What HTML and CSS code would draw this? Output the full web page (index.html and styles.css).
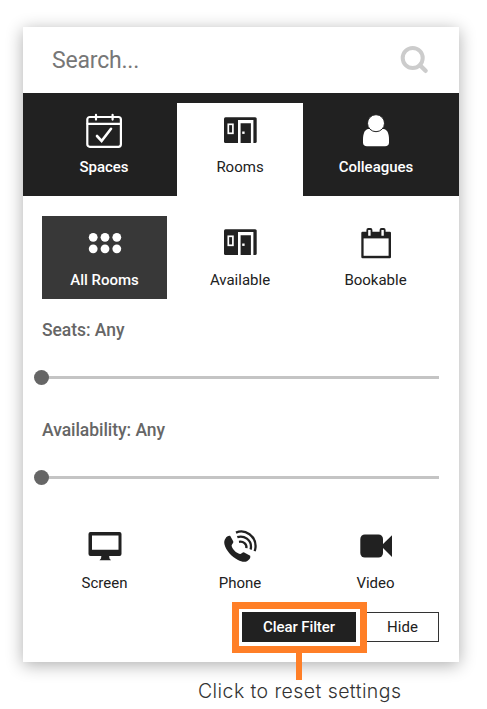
FILE: index.html
```html
<!DOCTYPE html>
<html lang="en">

<head>
    <meta charset="UTF-8">
    <meta name="viewport" content="width=device-width, initial-scale=1.0">
    <title>Room finder</title>
    <link rel="stylesheet" href="styles.css">
</head>

<body>
    <svg class="defs" width="0" height="0">
        <symbol id="icon-door" viewBox="0 0 40 40">
            <rect x="4" y="6.3" width="32.7" height="25.7" rx="1.5" fill="#212121"/>
            <rect x="8.3" y="13.3" width="4.6" height="9" fill="none" stroke="#fff" stroke-width="1.7"/>
            <path d="M18 32V9.1h15.400V32h-2.500V12.200H20.600V32z" fill="#fff"/>
            <rect x="22.2" y="20.5" width="2.4" height="2.4" fill="#fff"/>
        </symbol>
    </svg>
    <div class="panel">
        <div class="search">
            <input class="search-input" type="text" placeholder="Search...">
            <svg class="search-icon" viewBox="0 0 30 30">
                <circle cx="12.7" cy="13" r="10" fill="none" stroke="#ccc" stroke-width="4"/>
                <path d="M20 20.2l5.6 5.6" stroke="#ccc" stroke-width="4.4" stroke-linecap="round"/>
            </svg>
        </div>
        <div class="tabs">
            <div class="tab">
                <svg class="icon" viewBox="0 0 40 40" fill="none" stroke="#fff" stroke-width="2.2" stroke-linecap="round">
                    <rect x="3.3" y="6" width="33.6" height="29.8" rx="2.5"/>
                    <path d="M3.5 12.8h33M12 3.8v4.8M28.6 3.8v4.8"/>
                    <path d="M13 25l4.6 5 9.4-12.2" stroke-width="2.6"/>
                </svg>
                <span class="label">Spaces</span>
            </div>
            <div class="tab active">
                <svg class="icon"><use href="#icon-door"/></svg>
                <span class="label">Rooms</span>
            </div>
            <div class="tab">
                <svg class="icon" viewBox="0 0 40 40">
                    <path d="M12 18h16c3.5 1 5 5 5 10v3.5c0 2.5-1.500 3.800-4 3.800H11c-2.500 0-4-1.300-4-3.800V28c0-5 1.500-9 5-10z" fill="#fff"/>
                    <circle cx="20" cy="12.2" r="8.500" fill="#fff" stroke="#212121" stroke-width="1"/>
                </svg>
                <span class="label">Colleagues</span>
            </div>
        </div>
        <div class="content">
            <div class="tiles">
                <div class="tile selected">
                    <svg class="icon" viewBox="0 0 40 40" fill="#fff">
                        <circle cx="8.2" cy="14.3" r="4.4"/>
                        <circle cx="20" cy="14.3" r="4.4"/>
                        <circle cx="31.8" cy="14.3" r="4.4"/>
                        <circle cx="8.2" cy="25.8" r="4.4"/>
                        <circle cx="20" cy="25.8" r="4.4"/>
                        <circle cx="31.8" cy="25.8" r="4.4"/>
                    </svg>
                    <span class="label">All Rooms</span>
                </div>
                <div class="tile">
                    <svg class="icon"><use href="#icon-door"/></svg>
                    <span class="label">Available</span>
                </div>
                <div class="tile">
                    <svg class="icon" viewBox="0 0 40 40">
                        <rect x="5.3" y="8.7" width="29.7" height="26.6" rx="1.2" fill="#212121"/>
                        <rect x="7.6" y="15.4" width="25" height="17.4" fill="#fff"/>
                        <rect x="11.3" y="6" width="4.2" height="7.6" rx="1" fill="#fff" stroke="#212121" stroke-width="1.8"/>
                        <rect x="24.5" y="6" width="4.2" height="7.6" rx="1" fill="#fff" stroke="#212121" stroke-width="1.8"/>
                    </svg>
                    <span class="label">Bookable</span>
                </div>
            </div>

            <div class="filter">
                <div class="filter-name">Seats: Any</div>
                <div class="slider"><div class="knob"></div></div>
            </div>
            <div class="filter">
                <div class="filter-name">Availability: Any</div>
                <div class="slider"><div class="knob"></div></div>
            </div>

            <div class="tiles">
                <div class="tile">
                    <svg class="icon" viewBox="0 0 40 40" fill="#212121">
                        <path fill-rule="evenodd" d="M5.5 6h29a2 2 0 0 1 2 2v20a2 2 0 0 1-2 2h-29a2 2 0 0 1-2-2V8a2 2 0 0 1 2-2zM7 9.500v14.300h26.500V9.500z"/>
                        <path d="M16.500 29h7.500l.5 3.500 1.500 1.700H14.500l1.500-1.700z"/>
                    </svg>
                    <span class="label">Screen</span>
                </div>
                <div class="tile">
                    <svg class="icon" viewBox="0 0 40 40">
                        <path d="M5.500 12.500c1-2 3-3 4.800-2.600l3 5.600c.5 1.200-1.500 2.700-1.700 4 .5 3.700 4.700 7.700 8.400 8.500 1.300.2 3-2.200 4.200-1.600l6 3.400c.8 2-1 4.200-3.200 5.400-2.500 1.200-6 .4-9-1.200C11.500 30.500 6 24.500 4.500 18.500c-.6-2.200-.2-4.300 1-6z" fill="#212121"/>
                        <g fill="none" stroke="#212121" stroke-width="2.300">
                            <path d="M16 6.600C25 2.500 36.500 10 35.500 21.500c-.1 1-.4 2.400-.9 3.600"/>
                            <path d="M17.300 11.200c7-2.300 14 3 13.700 9.800 0 .8-.2 1.700-.5 2.500"/>
                            <path d="M19 15.800c4.300-.8 8 2.200 7.400 6.400"/>
                        </g>
                    </svg>
                    <span class="label">Phone</span>
                </div>
                <div class="tile">
                    <svg class="icon" viewBox="0 0 40 40" fill="#212121">
                        <rect x="4.300" y="8.500" width="22.700" height="23" rx="4.500"/>
                        <path d="M25 20L36 9.200v21.800z"/>
                    </svg>
                    <span class="label">Video</span>
                </div>
            </div>

            <div class="actions">
                <div class="clear">
                    <button class="btn btn-dark">Clear Filter</button>
                    <div class="highlight"></div>
                </div>
                <button class="btn">Hide</button>
            </div>
        </div>
    </div>
    <div class="caption">Click to reset settings</div>
</body>

</html>
```
FILE: styles.css
```css
body {
    margin: 0;
    padding: 27px 28px 0 23px;
    background: #fff;
    font-family: Roboto, "Liberation Sans", sans-serif;
    color: #212121;
}

.defs {
    position: absolute;
}

.panel {
    box-sizing: border-box;
    width: 436px;
    height: 635px;
    background: #fff;
    box-shadow: 0 3px 16px rgba(0, 0, 0, 0.32);
}

.search {
    display: flex;
    align-items: center;
    justify-content: space-between;
    box-sizing: border-box;
    height: 66px;
    padding: 0 29px;
}

.search-input {
    width: 250px;
    padding: 0;
    border: none;
    outline: none;
    font: 400 23px Roboto, sans-serif;
    letter-spacing: -0.2px;
}

.search-input::placeholder {
    color: #777;
}

.search-icon {
    width: 30px;
    height: 30px;
}

.tabs {
    display: flex;
    justify-content: space-between;
    box-sizing: border-box;
    height: 103px;
    padding: 10px 20px 0 18px;
    background: #212121;
}

.tab {
    display: flex;
    flex-direction: column;
    align-items: center;
    width: 126px;
    padding-top: 8px;
    color: #fff;
    font-weight: 500;
}

.tab.active {
    background: #fff;
    color: #212121;
    font-weight: 400;
}

.icon {
    display: block;
    width: 40px;
    height: 40px;
}

.label {
    margin-top: 6px;
    font-size: 15px;
    line-height: 20px;
}

.content {
    padding: 20px 20px 0 19px;
}

.tiles {
    display: grid;
    grid-template-columns: repeat(3, 125px);
    gap: 10.5px;
}

.tile {
    display: flex;
    flex-direction: column;
    align-items: center;
    box-sizing: border-box;
    height: 83px;
    padding-top: 7px;
}

.tile .label {
    margin-top: 7px;
}

.tile.selected {
    background: #383838;
    color: #fff;
    font-weight: 500;
}

.filter {
    height: 80px;
    padding-top: 20px;
}

.filter-name {
    color: #666;
    font-size: 17.5px;
    font-weight: 500;
    line-height: 22px;
    letter-spacing: -0.05px;
}

.slider {
    display: flex;
    align-items: center;
    height: 3px;
    margin-top: 35px;
    background: #c4c4c4;
}

.knob {
    flex: none;
    width: 15px;
    height: 15px;
    margin-left: -8px;
    border-radius: 50%;
    background: #666;
}

.filter + .tiles {
    margin-top: 20px;
}

.actions {
    display: flex;
    justify-content: flex-end;
    gap: 10px;
    margin-top: 10px;
}

.clear {
    position: relative;
}

.btn {
    display: block;
    box-sizing: border-box;
    width: 73px;
    height: 30px;
    padding: 0;
    border: 1px solid #333;
    background: #fff;
    color: #212121;
    font: 400 15px Roboto, sans-serif;
}

.btn-dark {
    width: 114px;
    background: #212121;
    border-color: #212121;
    color: #fff;
    font-weight: 500;
    letter-spacing: -0.1px;
}

/* callout frame drawn over the button */
.highlight {
    position: absolute;
    top: -10px;
    left: -10px;
    box-sizing: border-box;
    width: 135px;
    height: 51px;
    border: 7px solid #ff7f27;
}

.highlight::after {
    content: "";
    position: absolute;
    top: 44px;
    left: 57px;
    width: 6px;
    height: 27px;
    background: #ff7f27;
}

.caption {
    margin: 17px 0 0 175px;
    font-family: Inter, sans-serif;
    font-size: 19.5px;
    font-weight: 300;
    line-height: 24px;
    letter-spacing: 0.42px;
    color: #333;
    white-space: nowrap;
}
```
